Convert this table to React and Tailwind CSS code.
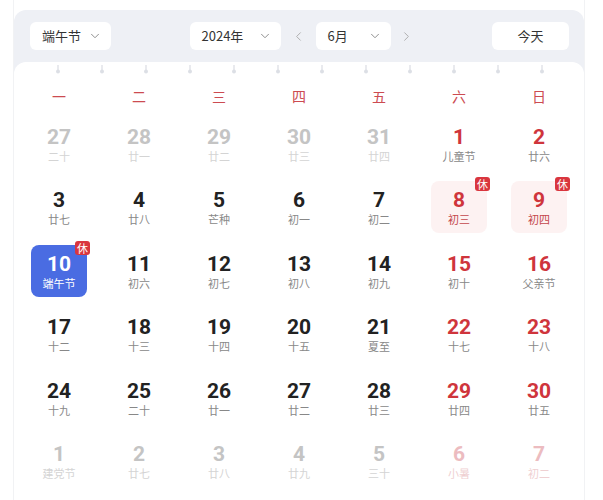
import React from 'react';
import { ChevronDown, ChevronLeft, ChevronRight } from 'lucide-react';

const weekdays = ['一', '二', '三', '四', '五', '六', '日'];

// kind: prev / cur / next ; rest = 休 badge ; sel = selected day
const weeks = [
  [
    { d: 27, l: '二十', kind: 'prev' },
    { d: 28, l: '廿一', kind: 'prev' },
    { d: 29, l: '廿二', kind: 'prev' },
    { d: 30, l: '廿三', kind: 'prev' },
    { d: 31, l: '廿四', kind: 'prev' },
    { d: 1, l: '儿童节' },
    { d: 2, l: '廿六' },
  ],
  [
    { d: 3, l: '廿七' },
    { d: 4, l: '廿八' },
    { d: 5, l: '芒种' },
    { d: 6, l: '初一' },
    { d: 7, l: '初二' },
    { d: 8, l: '初三', rest: true },
    { d: 9, l: '初四', rest: true },
  ],
  [
    { d: 10, l: '端午节', rest: true, sel: true },
    { d: 11, l: '初六' },
    { d: 12, l: '初七' },
    { d: 13, l: '初八' },
    { d: 14, l: '初九' },
    { d: 15, l: '初十' },
    { d: 16, l: '父亲节' },
  ],
  [
    { d: 17, l: '十二' },
    { d: 18, l: '十三' },
    { d: 19, l: '十四' },
    { d: 20, l: '十五' },
    { d: 21, l: '夏至' },
    { d: 22, l: '十七' },
    { d: 23, l: '十八' },
  ],
  [
    { d: 24, l: '十九' },
    { d: 25, l: '二十' },
    { d: 26, l: '廿一' },
    { d: 27, l: '廿二' },
    { d: 28, l: '廿三' },
    { d: 29, l: '廿四' },
    { d: 30, l: '廿五' },
  ],
  [
    { d: 1, l: '建党节', kind: 'next' },
    { d: 2, l: '廿七', kind: 'next' },
    { d: 3, l: '廿八', kind: 'next' },
    { d: 4, l: '廿九', kind: 'next' },
    { d: 5, l: '三十', kind: 'next' },
    { d: 6, l: '小暑', kind: 'next' },
    { d: 7, l: '初二', kind: 'next' },
  ],
];

function Select({ label, width }) {
  return (
    <div
      className={`${width} h-[28px] bg-white rounded-md flex items-center justify-between pl-3 pr-[9px] text-[13px] text-[#333]`}
    >
      <span>{label}</span>
      <ChevronDown size={14} strokeWidth={1.6} className="text-[#888]" />
    </div>
  );
}

function DayCell({ day, col }) {
  const weekend = col >= 5;
  const other = day.kind === 'prev' || day.kind === 'next';

  let numColor = weekend ? 'text-[#cf353c]' : 'text-[#222]';
  let lunarColor = 'text-[#888]';
  if (other) {
    numColor = weekend ? 'text-[#ecbcc0]' : 'text-[#c4c4c4]';
    lunarColor = weekend ? 'text-[#efd0d2]' : 'text-[#d4d4d4]';
  }
  if (day.rest) lunarColor = 'text-[#c4474c]';

  let box = '';
  if (day.sel) {
    box = 'bg-[#4a6ce2] h-[52px]';
    numColor = 'text-white';
    lunarColor = 'text-white';
  } else if (day.rest) {
    box = 'bg-[#fdf2f2] h-[50px]';
  }

  return (
    <div className="h-[63.5px] flex items-center justify-center">
      <div className={`relative w-[56px] h-[52px] rounded-lg flex flex-col items-center justify-center pt-[2px] ${box}`}>
        <span className={`leading-[22px] text-[21px] font-bold font-['Roboto',sans-serif] ${numColor}`}>
          {day.d}
        </span>
        <span className={`leading-[16px] text-[11px] whitespace-nowrap ${lunarColor}`}>{day.l}</span>
        {day.rest && (
          <span className="absolute -top-[4px] -right-[3px] w-[15px] h-[14px] rounded-[3px] bg-[#d9363e] text-white text-[11px] leading-[14px] text-center">
            休
          </span>
        )}
      </div>
    </div>
  );
}

export default function App() {
  return (
    <div className="w-[603px] h-[500px] bg-white overflow-hidden font-['Noto_Sans_CJK_SC','Noto_Sans',sans-serif]">
      <div className="ml-[13px] w-[572px] h-full border-x border-[#f1f2f4] pt-[10px]">
        <div className="bg-[#eef0f5] rounded-t-xl h-full flex flex-col">
          <div className="h-[52px] flex items-center justify-between pl-4 pr-[15px]">
            <Select label="端午节" width="w-[81px]" />
            <div className="flex items-center">
              <Select label="2024年" width="w-[91px]" />
              <ChevronLeft size={15} strokeWidth={1.5} className="text-[#aaa] mx-[10px]" />
              <Select label="6月" width="w-[75px]" />
              <ChevronRight size={15} strokeWidth={1.5} className="text-[#aaa] ml-[8px]" />
            </div>
            <div className="w-[77px] h-[28px] bg-white rounded-md flex items-center justify-center text-[13px] text-[#333]">
              今天
            </div>
          </div>

          <div className="flex-1 bg-white rounded-t-xl px-[5px]">
            <div className="h-[18px] flex gap-[40px] pl-[37px] pt-[3px]">
              {Array.from({ length: 12 }).map((_, i) => (
                <svg key={i} width="4" height="9" viewBox="0 0 4 9">
                  <rect x="1.25" y="0" width="1.5" height="6" fill="#e2e4e9" />
                  <circle cx="2" cy="6.5" r="2" fill="#dcdfe5" />
                </svg>
              ))}
            </div>
            <div className="grid grid-cols-7 h-[32px] items-center">
              {weekdays.map((w) => (
                <div key={w} className="text-center text-[14px] text-[#cc4b51]">
                  {w}
                </div>
              ))}
            </div>
            {weeks.map((week, r) => (
              <div key={r} className="grid grid-cols-7">
                {week.map((day, c) => (
                  <DayCell key={c} day={day} col={c} />
                ))}
              </div>
            ))}
          </div>
        </div>
      </div>
    </div>
  );
}
